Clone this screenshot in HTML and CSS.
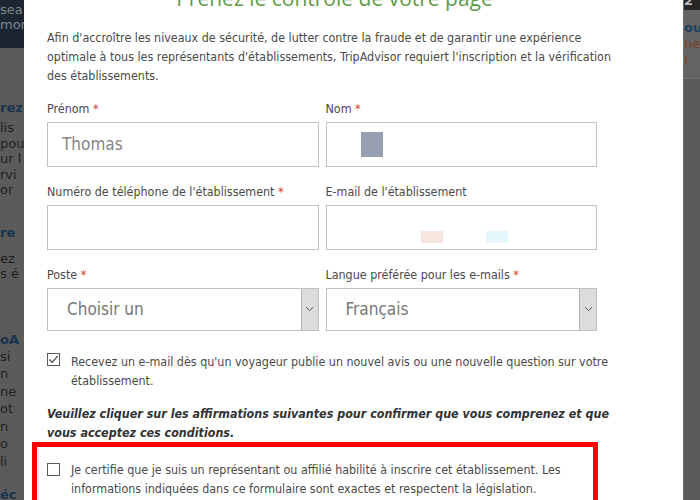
FILE: index.html
```html
<!DOCTYPE html>
<html lang="fr">
<head>
<meta charset="utf-8">
<title>Prenez le contrôle de votre page</title>
<link rel="stylesheet" href="styles.css">
</head>
<body>
<div class="page">
  <div class="bg-left">
    <div class="bg-left-head"><div>sea</div><div>mon</div></div>
    <div class="bg-block b1">
      <div class="bg-h">rez</div>
      <div>lis</div><div>pou</div><div>ur l</div><div>rvi</div><div>or</div>
    </div>
    <div class="bg-block b2">
      <div class="bg-h">re</div>
      <div class="bg-gap">ez</div><div>s é</div>
    </div>
    <div class="bg-block b3">
      <div class="bg-h">oA</div>
      <div>si</div><div>n</div><div>ne</div><div>ot</div><div>n</div><div>o</div><div>li</div>
    </div>
    <div class="bg-block b4"><div class="bg-h">éc</div></div>
  </div>

  <main class="modal">
    <h1 class="title">Prenez le contrôle de votre page</h1>
    <p class="intro">Afin d'accroître les niveaux de sécurité, de lutter contre la fraude et de garantir une expérience optimale à tous les représentants d'établissements, TripAdvisor requiert l'inscription et la vérification des établissements.</p>

    <div class="fields">
      <div class="field">
        <label>Prénom <span class="req">*</span></label>
        <div class="input"><span class="value">Thomas</span></div>
      </div>
      <div class="field">
        <label>Nom <span class="req">*</span></label>
        <div class="input"><span class="blur blur-name"></span></div>
      </div>
      <div class="field">
        <label>Numéro de téléphone de l'établissement <span class="req">*</span></label>
        <div class="input"></div>
      </div>
      <div class="field">
        <label>E-mail de l'établissement</label>
        <div class="input"><span class="blur blur-a"></span><span class="blur blur-b"></span></div>
      </div>
      <div class="field">
        <label>Poste <span class="req">*</span></label>
        <div class="select"><span class="value sel">Choisir un</span><span class="arrow"><svg width="9" height="6" viewBox="0 0 9 6"><path d="M1 1.2 L4.5 4.6 L8 1.2" fill="none" stroke="#555" stroke-width="1"/></svg></span></div>
      </div>
      <div class="field">
        <label>Langue préférée pour les e-mails <span class="req">*</span></label>
        <div class="select"><span class="value sel">Français</span><span class="arrow"><svg width="9" height="6" viewBox="0 0 9 6"><path d="M1 1.2 L4.5 4.6 L8 1.2" fill="none" stroke="#555" stroke-width="1"/></svg></span></div>
      </div>
    </div>

    <div class="check-row notify">
      <span class="box"><svg width="11" height="11" viewBox="0 0 11 11"><path d="M1.5 5.5 L4.3 8.3 L9.6 2.2" fill="none" stroke="#444" stroke-width="1.2"/></svg></span>
      <span class="check-text">Recevez un e-mail dès qu'un voyageur publie un nouvel avis ou une nouvelle question sur votre établissement.</span>
    </div>

    <p class="notice">Veuillez cliquer sur les affirmations suivantes pour confirmer que vous comprenez et que vous acceptez ces conditions.</p>

    <div class="terms">
      <div class="check-row">
        <span class="box"></span>
        <span class="check-text">Je certifie que je suis un représentant ou affilié habilité à inscrire cet établissement. Les informations indiquées dans ce formulaire sont exactes et respectent la législation.</span>
      </div>
    </div>
  </main>

  <div class="bg-right">
    <div class="bg-right-top">2</div>
    <div class="bg-right-box">
      <div class="r-h">ous</div>
      <div class="r-t">ner</div>
      <div class="r-t">r</div>
    </div>
  </div>
</div>
</body>
</html>
```

FILE: styles.css
```css
* { box-sizing: border-box; }
html, body { margin: 0; padding: 0; }
body {
  width: 700px;
  height: 500px;
  overflow: hidden;
  background: #5a5a5a;
  font-family: "DejaVu Sans", Verdana, sans-serif;
}
.page {
  display: flex;
  height: 500px;
  overflow: hidden;
}

/* dimmed page behind the dialog */
.bg-left {
  width: 24px;
  flex: none;
  overflow: hidden;
  background: #5b5b5b;
  color: #1f1f1f;
  font-size: 13px;
  white-space: nowrap;
}
.bg-left-head {
  height: 48px;
  background: #1c2630;
  color: #7e868d;
  padding-top: 1.5px;
  line-height: 15px;
}
.bg-block { line-height: 15.5px; }
.bg-h { font-weight: 700; color: #18344d; line-height: 16px; }
.b1 { margin-top: 52px; }
.b1 .bg-h { margin-bottom: 4px; }
.b2 { margin-top: 27px; }
.b2 .bg-h { margin-bottom: 10px; }
.b3 { margin-top: 50px; line-height: 17.5px; }
.b4 { margin-top: 17px; }

.bg-right {
  flex: 1;
  overflow: hidden;
  background: #595959;
  border-left: 1px solid #6e6e6e;
  font-size: 13px;
  white-space: nowrap;
}
.bg-right-top {
  height: 10px;
  background: #262626;
  color: #bbb;
  font-weight: 700;
  line-height: 2px;
}
.bg-right-box {
  height: 69px;
  background: #646464;
  border-bottom: 1px solid #747474;
  padding-top: 9px;
  line-height: 17px;
}
.r-h { font-weight: 700; color: #1a4166; }
.r-t { color: #7c3f22; line-height: 16px; }

/* dialog */
.modal {
  width: 659px;
  flex: none;
  background: #fff;
  padding: 0 61px 0 23px;
  color: #4a4a4a;
  font-family: "DejaVu Sans Condensed", "DejaVu Sans", sans-serif;
  font-stretch: condensed;
  font-size: 12.4px;
  line-height: 19px;
}
.title {
  margin: -15px 0 17px;
  font: 400 21px/26px "Open Sans", sans-serif;
  color: #5e9b45;
  text-align: center;
}
.intro { margin: 0 0 13.5px; }

.fields {
  width: 550px;
  display: grid;
  grid-template-columns: 1fr 1fr;
  gap: 15px 7px;
}
.field label { display: block; margin-bottom: 4px; }
.req { color: #d9442c; }

.input, .select {
  position: relative;
  height: 45px;
  border: 1px solid #c2c2c2;
  background: #fff;
  display: flex;
  align-items: center;
}
.select { height: 43px; }
.value {
  padding-left: 14px;
  font-family: "DejaVu Sans", sans-serif;
  font-size: 17px;
  color: #858585;
}
.value.sel { padding-left: 19px; flex: 1; color: #777; }
.arrow {
  width: 17px;
  align-self: stretch;
  background: #dcdcdc;
  border-left: 1px solid #b5b5b5;
  display: flex;
  align-items: center;
  justify-content: center;
}
.blur { position: absolute; }
.blur-name { left: 34px; top: 9px; width: 22px; height: 25px; background: #97a0b2; }
.blur-a { left: 94px; top: 25px; width: 22px; height: 12px; background: #f7e7df; }
.blur-b { left: 159px; top: 25px; width: 22px; height: 12px; background: #e6f7fb; }

.check-row {
  display: flex;
  align-items: flex-start;
  gap: 11px;
}
.notify { margin-top: 21.5px; }
.box {
  flex: none;
  width: 13px;
  height: 13px;
  margin-top: 1px;
  border: 1px solid #5c5c5c;
  background: #fff;
  display: flex;
  align-items: center;
  justify-content: center;
}
.notice {
  margin: 14px 0 0;
  font-weight: 700;
  font-style: italic;
  color: #333;
}
.terms {
  width: 566px;
  margin-left: -15px;
  border: 5px solid #ff0000;
  padding: 12.5px 10px 10px;
}
.terms .box { margin-top: 3px; }
```
